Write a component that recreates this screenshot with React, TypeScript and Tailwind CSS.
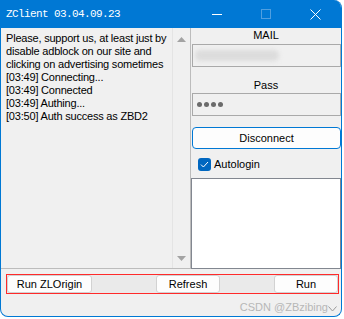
const sans = { fontFamily: '"Liberation Sans", Arial, sans-serif' };

const logLines = [
  "Please, support us, at least just by",
  "disable adblock on our site and",
  "clicking on advertising sometimes",
  "[03:49] Connecting...",
  "[03:49] Connected",
  "[03:49] Authing...",
  "[03:50] Auth success as ZBD2",
];

function TitleBar() {
  return (
    <div className="h-[28px] bg-[#0078d4] flex items-center text-white shrink-0">
      <span
        className="pl-[5px] text-[11px] tracking-[-0.6px] leading-none"
        style={{ fontFamily: '"Liberation Mono", "Courier New", monospace' }}
      >
        ZClient 03.04.09.23
      </span>
      <div className="ml-auto flex items-center h-full">
        <div className="w-[10px] h-px bg-white mr-[39px]" />
        <div className="w-[10px] h-[10px] border border-[#4f9fe0] mr-[39px]" />
        <svg width="11" height="11" viewBox="0 0 11 11" className="mr-[20px]">
          <path d="M0.5 0.5L10.5 10.5M10.5 0.5L0.5 10.5" stroke="white" strokeWidth="1" />
        </svg>
      </div>
    </div>
  );
}

function Arrow({ down }: { down?: boolean }) {
  return (
    <svg width="9" height="5" viewBox="0 0 9 5">
      <path d={down ? "M0 0H9L4.5 5Z" : "M0 5H9L4.5 0Z"} fill="#a3a3a3" />
    </svg>
  );
}

function LogBox() {
  return (
    <div className="w-[190px] flex border-r border-b border-[#bcbcbc]">
      <div className="flex-1 pt-[4px] pl-[5px] text-[11px] leading-[13px] tracking-[-0.2px] text-black">
        {logLines.map((l) => (
          <div key={l} className="whitespace-nowrap">{l}</div>
        ))}
      </div>
      <div className="w-[18px] border-l border-[#e4e4e4] flex flex-col items-center justify-between pt-[9px] pb-[7px]">
        <Arrow />
        <Arrow down />
      </div>
    </div>
  );
}

function RightPanel() {
  return (
    <div className="w-[150px] flex flex-col text-[11px] text-black">
      <div className="h-[14px] leading-[14px] text-center">MAIL</div>
      <div className="mt-[2px] ml-[1px] h-[23px] border border-[#a9a9a9] bg-[#f0f0f0] flex items-center pl-[2px] overflow-hidden">
        <div className="w-[84px] h-[11px] bg-[#dcdcdc] rounded-[5px] blur-[2px]" />
      </div>
      <div className="mt-[11px] h-[14px] leading-[14px] text-center">Pass</div>
      <div className="mt-[1px] ml-[1px] h-[23px] border border-[#a9a9a9] bg-[#f0f0f0] flex items-center gap-[2px] pl-[4px]">
        {[0, 1, 2, 3].map((i) => (
          <div key={i} className="w-[5px] h-[5px] rounded-full bg-[#6b6b6b]" />
        ))}
      </div>
      <button className="mt-[11px] ml-[1px] h-[22px] border border-[#0078d4] rounded-[4px] bg-[#fdfdfd] text-[11px] leading-none">
        Disconnect
      </button>
      <div className="mt-[9px] ml-[7px] h-[13px] flex items-center gap-[3px]">
        <div className="w-[13px] h-[13px] rounded-[3px] bg-[#0067c0] flex items-center justify-center">
          <svg width="9" height="7" viewBox="0 0 9 7">
            <path d="M1 3.6L3.4 6L8 1" stroke="white" strokeWidth="1" fill="none" />
          </svg>
        </div>
        <span>Autologin</span>
      </div>
      <div className="mt-[7px] flex-1 bg-white border border-[#828790]" />
    </div>
  );
}

function BottomBar() {
  return (
    <div className="flex-1 flex flex-col text-[11px] text-black">
      <div className="mt-[5px] ml-[5px] w-[333px] h-[20px] border border-[#ff2a2a] bg-[#eaeaea] flex items-center">
        <button className="w-[85px] h-[18px] bg-[#fdfdfd] border border-[#d2d2d2] rounded-[3px] leading-none">
          Run ZLOrigin
        </button>
        <button className="ml-[64px] w-[64px] h-[18px] bg-[#fdfdfd] border border-[#d2d2d2] rounded-[3px] leading-none">
          Refresh
        </button>
        <button className="ml-auto w-[64px] h-[18px] bg-[#fdfdfd] border border-[#d2d2d2] rounded-[3px] leading-none">
          Run
        </button>
      </div>
      <div className="mt-[5px] flex items-center justify-end pr-[4px] text-[#b7b7b7]">
        <span>CSDN @ZBzibing</span>
        <svg width="9" height="6" viewBox="0 0 9 6" className="mt-[3px]">
          <path d="M0.5 0.5L4.5 5L8.5 0.5" stroke="#9a9a9a" fill="none" />
        </svg>
      </div>
    </div>
  );
}

export default function App() {
  return (
    <div className="w-[344px] h-[319px] bg-white" style={sans}>
      <div className="w-[342px] h-[317px] rounded-tr-[8px] rounded-b-[8px] border-x border-b border-[#0078d4] bg-[#f0f0f0] overflow-hidden flex flex-col">
        <TitleBar />
        <div className="h-[241px] flex shrink-0">
          <LogBox />
          <RightPanel />
        </div>
        <BottomBar />
      </div>
    </div>
  );
}
